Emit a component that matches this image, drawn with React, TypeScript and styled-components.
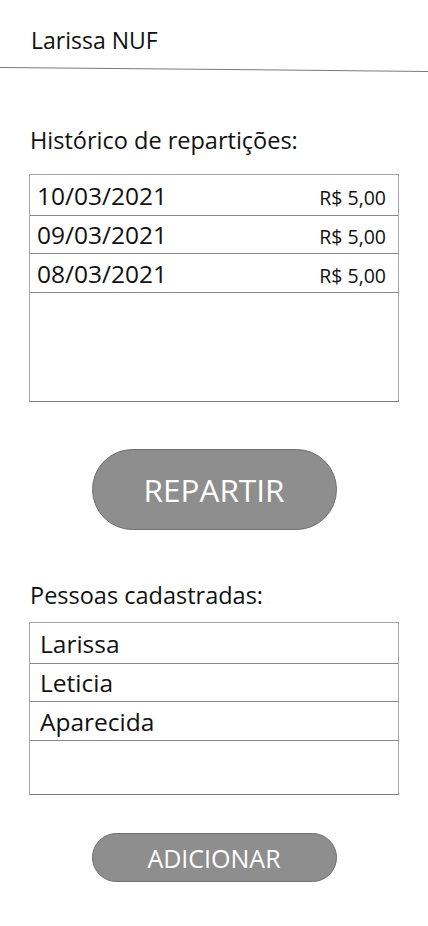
import React from "react";
import styled, { createGlobalStyle } from "styled-components";

const Global = createGlobalStyle`
  html, body { margin: 0; padding: 0; background: #fff; }
  body { font-family: "Open Sans", "Noto Sans", sans-serif; color: #111; }
`;

const Page = styled.div`
  width: 428px;
  height: 926px;
  overflow: hidden;
  display: flex;
  flex-direction: column;
`;

const Header = styled.header`
  height: 67px;
  box-sizing: border-box;
  padding: 26px 0 0 31px;
  font-size: 23px;
  line-height: 28px;
`;

const Rule = styled.div`
  width: 430px;
  height: 0;
  border-top: 1px solid #7a7a7a;
  transform-origin: 0 0;
  transform: rotate(0.53deg);
`;

const Section = styled.section`
  display: flex;
  flex-direction: column;
  padding: 0 29px;
`;

const Label = styled.h2`
  margin: 0;
  padding-left: 1px;
  font-weight: 400;
  font-size: 23.5px;
  line-height: 28px;
`;

const ListBox = styled.div<{ $h: number }>`
  height: ${(p) => p.$h}px;
  box-sizing: border-box;
  border: 1px solid #a8a8a8;
  border-bottom-color: #7a7a7a;
  display: flex;
  flex-direction: column;
`;

const Row = styled.div<{ $h: number }>`
  height: ${(p) => p.$h}px;
  box-sizing: border-box;
  border-bottom: 1px solid #8a8a8a;
  display: flex;
  align-items: center;
  justify-content: space-between;
  padding: 0 12px 0 7px;
`;

const DateText = styled.span`
  font-size: 24.5px;
`;

const Amount = styled.span`
  font-size: 19.5px;
  padding-top: 4px;
`;

const Name = styled.span`
  font-size: 24.5px;
  padding-left: 3px;
`;

const PillButton = styled.button<{ $h: number; $fs: number }>`
  align-self: center;
  width: 245px;
  height: ${(p) => p.$h}px;
  border-radius: ${(p) => p.$h / 2}px;
  background: #8e8e8e;
  border: 1px solid #6e6e6e;
  color: #fff;
  font-family: "Open Sans", "Noto Sans", sans-serif;
  font-size: ${(p) => p.$fs}px;
  padding: 0;
  cursor: pointer;
`;

const Spacer = styled.div<{ $h: number }>`
  height: ${(p) => p.$h}px;
  flex: none;
`;

const history = [
  { d: "10/03/2021", v: "R$ 5,00", h: 41 },
  { d: "09/03/2021", v: "R$ 5,00", h: 38 },
  { d: "08/03/2021", v: "R$ 5,00", h: 39 },
];

const people = [
  { n: "Larissa", h: 41 },
  { n: "Leticia", h: 38 },
  { n: "Aparecida", h: 39 },
];

export default function App() {
  return (
    <Page>
      <Global />
      <Header>Larissa NUF</Header>
      <Rule />
      <Spacer $h={58} />
      <Section>
        <Label>Histórico de repartições:</Label>
        <Spacer $h={20} />
        <ListBox $h={228}>
          {history.map((r) => (
            <Row key={r.d} $h={r.h}>
              <DateText>{r.d}</DateText>
              <Amount>{r.v}</Amount>
            </Row>
          ))}
        </ListBox>
        <Spacer $h={47} />
        <PillButton $h={81} $fs={31.5}>REPARTIR</PillButton>
        <Spacer $h={51} />
        <Label>Pessoas cadastradas:</Label>
        <Spacer $h={13} />
        <ListBox $h={173}>
          {people.map((p) => (
            <Row key={p.n} $h={p.h}>
              <Name>{p.n}</Name>
            </Row>
          ))}
        </ListBox>
        <Spacer $h={38} />
        <PillButton $h={49} $fs={25}>ADICIONAR</PillButton>
      </Section>
    </Page>
  );
}
